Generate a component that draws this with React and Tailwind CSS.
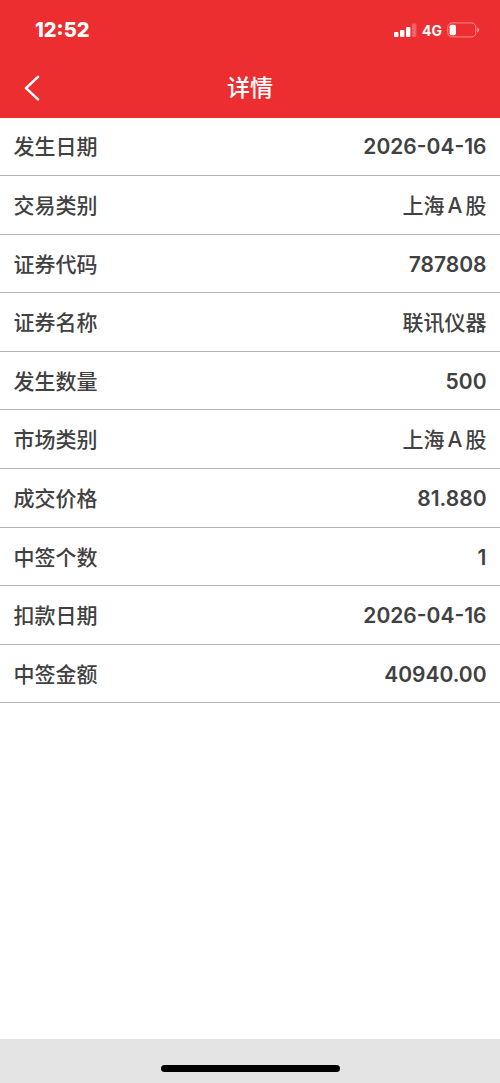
import React from 'react';
import clsx from 'clsx';

const rows = [
  { label: '发生日期', value: '2026-04-16', numeric: true },
  { label: '交易类别', value: '上海 A 股' },
  { label: '证券代码', value: '787808', numeric: true },
  { label: '证券名称', value: '联讯仪器' },
  { label: '发生数量', value: '500', numeric: true },
  { label: '市场类别', value: '上海 A 股' },
  { label: '成交价格', value: '81.880', numeric: true },
  { label: '中签个数', value: '1', numeric: true },
  { label: '扣款日期', value: '2026-04-16', numeric: true },
  { label: '中签金额', value: '40940.00', numeric: true },
];

const SignalIcon = () => (
  <svg width="23" height="14" viewBox="0 0 23 14" fill="white">
    <rect x="0" y="9" width="4.4" height="5" rx="1" />
    <rect x="6" y="7" width="4.4" height="7" rx="1" />
    <rect x="12" y="4" width="4.4" height="10" rx="1" />
    <rect x="18" y="0.5" width="4.4" height="13.5" rx="1" opacity="0.25" />
  </svg>
);

const BatteryIcon = () => (
  <svg width="33" height="16" viewBox="0 0 33 16" fill="none">
    <rect x="0.8" y="0.9" width="28" height="14" rx="4.2" stroke="white" strokeOpacity="0.45" />
    <rect x="2.6" y="2.8" width="6.4" height="10.4" rx="1.8" fill="white" />
    <path d="M30.3 5.6c1.2.4 1.8 1.3 1.8 2.4s-.6 2-1.8 2.4z" fill="white" fillOpacity="0.5" />
  </svg>
);

const StatusBar = () => (
  <div className="h-[60px] flex items-center justify-between pl-[35px] pr-5">
    <span className="text-[20px] font-extrabold">12:52</span>
    <div className="flex items-center">
      <SignalIcon />
      <span className="ml-[5px] mr-[5px] text-[14px] font-bold">4G</span>
      <BatteryIcon />
    </div>
  </div>
);

const TitleBar = () => (
  <div className="h-[57.5px] grid grid-cols-3 items-center px-6 pb-[1.5px]">
    <button aria-label="返回" className="justify-self-start">
      <svg width="16" height="26" viewBox="0 0 16 26" fill="none">
        <path d="M14 1.8 2 13.2l12 11.2" stroke="white" strokeWidth="2.5" strokeLinecap="round" strokeLinejoin="round" />
      </svg>
    </button>
    <h1 className="text-center text-[23px] leading-8 font-medium">详情</h1>
  </div>
);

const DetailRow = ({ label, value, numeric }) => (
  <div className="h-[58.6px] pt-[2.4px] flex items-center justify-between px-[13.5px] border-b border-[#b4b4b4]">
    <span className="text-[21px] leading-8">{label}</span>
    <span
      className={clsx(
        'text-[21px] leading-8',
        numeric ? 'font-semibold' : '[word-spacing:-2.6px]'
      )}
    >
      {value}
    </span>
  </div>
);

const App = () => {
  return (
    <div className="w-full h-[1083px] flex flex-col bg-white font-['Inter','Noto_Sans_CJK_SC',sans-serif]">
      <header className="bg-[#ed2e30] text-white">
        <StatusBar />
        <TitleBar />
      </header>

      <main className="flex-1 text-[#414141] font-medium">
        {rows.map((row) => (
          <DetailRow key={row.label} {...row} />
        ))}
      </main>

      {/* Home indicator area */}
      <footer className="h-11 pt-[26px] bg-[#e4e4e4]">
        <div className="w-[179px] h-[7px] mx-auto rounded-full bg-black" />
      </footer>
    </div>
  );
};

export default App;
